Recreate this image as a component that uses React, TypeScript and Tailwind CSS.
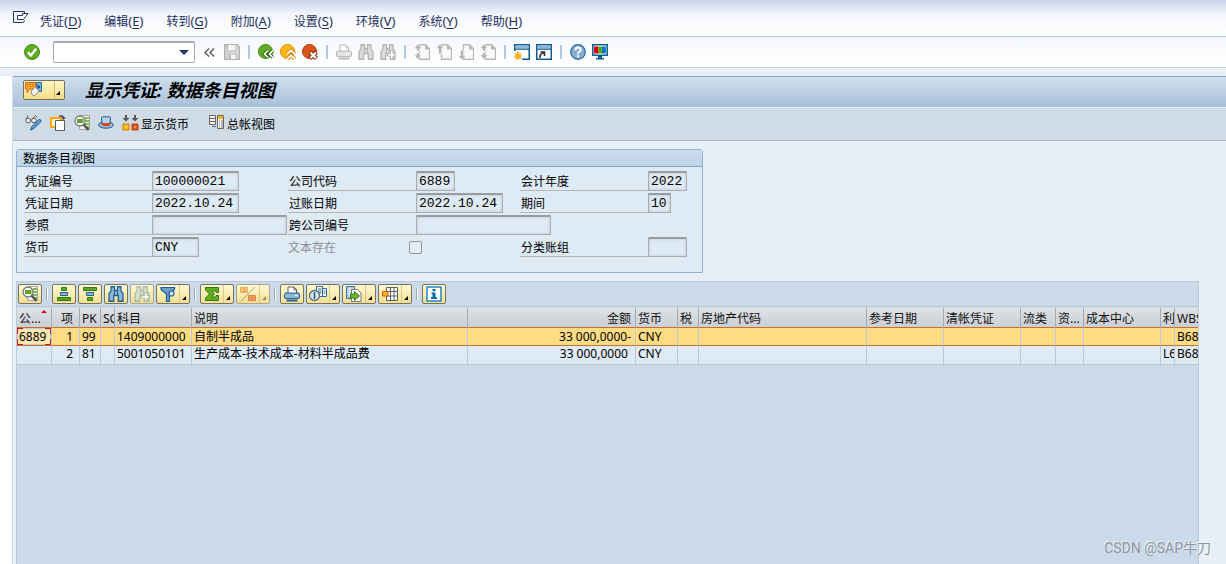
import type { ReactNode } from "react";

function Icon({ children, w = 16 }: { children: ReactNode; w?: number }) {
  return (
    <svg width={w} height="16" viewBox={`0 0 ${w} 16`} fill="none" className="block shrink-0" aria-hidden="true">
      {children}
    </svg>
  );
}

const G = "#b9b9b9";

const CheckIcon = () => (
  <Icon>
    <circle cx="8" cy="8" r="7.5" fill="#5fae22" stroke="#3f8a1c" />
    <path d="M3.8 8.2l3 3.2 5.4-6.6" stroke="#fff" strokeWidth="2.4" />
  </Icon>
);
const SaveIcon = () => (
  <Icon>
    <path d="M.75.75h12.500l2 2v12.500H.75z" fill="#d9d9d9" stroke="#b4b4b4" strokeWidth="1.500" />
    <path d="M3.500 1v6h8.500V1" fill="#f6f6f6" stroke={G} />
    <path d="M4 15v-5h8v5" fill="#f6f6f6" stroke={G} />
    <path d="M5 11h2v4H5z" fill={G} />
  </Icon>
);
const BackIcon = () => (
  <Icon>
    <circle cx="7.5" cy="7.5" r="7" fill="#62ad22" stroke="#3c8719" />
    <path d="M10 6.5L6.5 10l3.5 3.5M15 6.5L11.5 10l3.5 3.5" stroke="#2c6c12" strokeWidth="3.6" />
    <path d="M10 6.5L6.5 10l3.5 3.5M15 6.5L11.5 10l3.5 3.5" stroke="#fff" strokeWidth="1.7" />
  </Icon>
);
const UpIcon = () => (
  <Icon>
    <circle cx="7.5" cy="7.5" r="7" fill="#fdb913" stroke="#e08a00" />
    <path d="M7 10l4-3.5 4 3.5M7 15l4-3.5 4 3.5" stroke="#d87c00" strokeWidth="3.6" />
    <path d="M7 10l4-3.5 4 3.5M7 15l4-3.5 4 3.5" stroke="#fff" strokeWidth="1.7" />
  </Icon>
);
const CancelIcon = () => (
  <Icon>
    <circle cx="7.5" cy="7.5" r="7" fill="#d9531e" stroke="#b23c10" />
    <path d="M8 8l6.5 6.5M14.5 8L8 14.5" stroke="#8e2c08" strokeWidth="4.2" />
    <path d="M8.5 8.5l5.5 5.5M14 8.5L8.5 14" stroke="#fff" strokeWidth="2.2" />
  </Icon>
);
const PrintIcon = ({ color }: { color?: boolean }) => {
  const s = color ? "#1c5f93" : G;
  return (
    <Icon>
      <path d="M4 7V1h6l2.5 2.5V7" fill="#fff" stroke={color ? "#5a5a5a" : G} />
      <path d="M10 1v3h3" stroke={color ? "#5a5a5a" : G} />
      <rect x=".5" y="7" width="15" height="5.5" rx="1.5" fill={color ? "#8fb6d6" : "#e2e2e2"} stroke={s} />
      <path d="M11 9.5h2.5" stroke="#fff" />
      <path d="M2.5 14.5h11" stroke={s} strokeWidth="2" />
    </Icon>
  );
};
const Binoculars = ({ kind = "gray" }: { kind?: "gray" | "grayPlus" | "blue" | "bluePlus" }) => {
  const plus = kind === "grayPlus" || kind === "bluePlus";
  const stroke = kind === "blue" ? "#1f6295" : kind === "bluePlus" ? "#98b0ac" : "#b4b4b4";
  const fill = kind === "blue" ? "#8db5da" : kind === "bluePlus" ? "#d3dfd2" : "#dcdcdc";
  return (
    <Icon>
      <path d="M3 .75h3.5V4.5h3V.75H13V5l2 2.5v7.75h-4.750V9.5h-4.5v5.750H1V7.500L3 5z" fill={fill} stroke={stroke} strokeWidth="1.3" />
      <path d="M6.5 4.500v5M9.500 4.500v5" stroke={stroke} />
      {plus && (
        <path d="M10.500 6.500H13v3h2.500V12H13v3h-2.500v-3h-3V9.500h3z" fill="#fff" stroke={stroke} />
      )}
    </Icon>
  );
};
const PageIcon = ({ kind }: { kind: "first" | "prev" | "next" | "last" }) => (
  <Icon>
    <path d="M5.5.75h6l4 4v10.500H5.500z" fill="#fafafa" stroke={G} strokeWidth="1.3" />
    <path d="M11 .500V5.500h5z" fill={G} />
    <g fill="#b4b4b4" stroke="#fff" strokeWidth=".6">
      {(kind === "first" || kind === "last") && (
        <path d="M4 0L0 4.500h2.500V7h3V4.500H8zM4 15.500L0 11h2.500V8.500h3V11H8z" />
      )}
      {kind === "prev" && <path d="M4 0L0 4.500h2.500V10h3V4.500H8z" />}
      {kind === "next" && <path d="M4 16l-4-4.500h2.500V6h3v5.500H8z" />}
    </g>
  </Icon>
);
const WindowIcon = ({ kind }: { kind: "new" | "shortcut" }) => (
  <Icon>
    <rect x=".75" y=".75" width="14.5" height="14.5" fill="#fff" stroke="#0d5d92" strokeWidth="1.5" />
    <path d="M1.5 1.5h13v3h-13z" fill="#8db9dc" />
    <path d="M1 5.2h14" stroke="#0d5d92" strokeWidth="1.2" />
    {kind === "new" ? (
      <>
        <path d="M0 7h8v9H0z" fill="#fff" />
        <path d="M4 7.5V16M0 12h8M1.200 9.200l5.600 5.600M6.800 9.200l-5.600 5.600" stroke="#f08a00" strokeWidth="1.2" />
        <circle cx="4" cy="12" r="2.5" fill="#ffb400" />
      </>
    ) : (
      <path d="M4 14V12q0-2 4-3.500M4.500 8H8.500v4" stroke="#333" strokeWidth="1.6" />
    )}
  </Icon>
);
const HelpIcon = () => (
  <Icon>
    <circle cx="8" cy="8" r="7.3" fill="#86aed2" stroke="#2a6a9c" strokeWidth="1.2" />
    <path d="M5.5 6.2q0-2.7 2.600-2.700t2.500 2.300q0 1.300-1.400 2-1.200.6-1.200 2.200M8 11.200v2" stroke="#fff" strokeWidth="1.9" />
  </Icon>
);
const MonitorIcon = () => (
  <Icon>
    <rect x=".75" y=".75" width="14.5" height="10.5" fill="#fff" stroke="#0d5d92" strokeWidth="1.5" />
    <path d="M2 2.500h4v7H2z" fill="#d8000f" />
    <path d="M6 2.500h4v7H6z" fill="#5fa81e" />
    <path d="M10 2.500h4v7h-4z" fill="#0a7bc4" />
    <path d="M6 11.500h4V14h2v1.500H4V14h2z" fill="#0d5d92" />
  </Icon>
);
const MenuIcon = () => (
  <Icon>
    <path d="M11.500 2.500V.5H.5v11h9q2 0 2-2" stroke="#1f3566" />
    <path d="M4.500 4.500h5v-2H15L10.500 8.500h-6z" fill="#fff" stroke="#1f3566" />
  </Icon>
);
const ObjectsIcon = () => (
  <Icon w={18}>
    <path d="M11.500.5h5v9h-6z" fill="#7db3dc" stroke="#1c6ca5" />
    <path d="M12.500 2.500L15.500 5l-3 2.500z" fill="#0d4f80" />
    <path d="M.5.500h10V7H5l-3 3.500V7H.500z" fill="#fbb02a" stroke="#d9601a" />
    <path d="M2 2.500h7M2 4.500h7" stroke="#d9601a" strokeDasharray="1.500 1" />
    <path d="M7 8l3.500-3L14 9l-3.500 4-2 1L6 11z" fill="#f8f6ec" stroke="#8a8a8a" />
  </Icon>
);
const GlassesIcon = () => (
  <Icon w={17}>
    <circle cx="3.200" cy="5.500" r="2.300" fill="#f5f8fa" stroke="#555" />
    <circle cx="9" cy="5.500" r="2.300" fill="#f5f8fa" stroke="#555" />
    <path d="M1 4.500L3 .500M5.500 5h1.200M8 3.200L10.500.500l2 2" stroke="#666" />
    <path d="M14.500 4l2 2-7.500 7.500-3.500 1.500L7 11.500z" fill="#5b9fd2" stroke="#1c5f93" />
  </Icon>
);
const OtherDocIcon = () => (
  <Icon>
    <path d="M1 3h10v9H1z" fill="#fff3d0" stroke="#fba80e" strokeWidth="2" />
    <path d="M5.500 5.500h9v10h-9z" fill="#fff" stroke="#5c5c5c" />
    <path d="M9 1h2.500q2 0 2 2" stroke="#4a4a4a" strokeWidth="1.4" />
    <path d="M11 2.500h5L13.500 5z" fill="#4a4a4a" />
  </Icon>
);
const DetailIcon = () => (
  <Icon>
    <path d="M5.500.5h10v14h-10z" fill="#f5f5ee" stroke="#a5a5a0" />
    <path d="M11 3h4M11 6h4M11 9h4M11 12h4" stroke="#5fa52b" strokeWidth="1.5" />
    <circle cx="6" cy="6" r="5" fill="#fff" stroke="#7a7a7a" strokeWidth="1.3" />
    <path d="M3 4h6.500v4H3z" fill="#5fa52b" />
    <path d="M9.500 9.500l5 5.500" stroke="#555" strokeWidth="2.6" />
  </Icon>
);
const HatIcon = () => (
  <Icon>
    <ellipse cx="8" cy="10" rx="7.4" ry="3.2" fill="#9cc4e4" stroke="#165b8e" />
    <path d="M4 9L3.500 2.500Q4.500 1 8 2q3.500-1 4.500.5L12 9z" fill="#b5d4ec" stroke="#165b8e" />
    <path d="M3.500 7.500q4.500 2 9 0V10q-4.500 2.500-9 0z" fill="#d34514" />
  </Icon>
);
const CurrencyIcon = () => (
  <Icon w={17}>
    <path d="M3 0h2v3h2.500L4 6.500.500 3H3zM12 0h2v3h2.500L13 6.500 9.500 3H12z" fill="#555" />
    <path d="M1 9h6v6H1z" fill="#fdb913" stroke="#d97a00" />
    <path d="M10 9h6v6h-6z" fill="#e2571c" stroke="#b23c10" />
    <path d="M3 11h2v2H3z" fill="#ffd56a" />
    <path d="M12 11h2v2h-2z" fill="#f58a55" />
  </Icon>
);
const LedgerIcon = () => (
  <Icon>
    <path d="M.5.500h6v9h-6zM.5 3.500h6M.5 6.500h6M3 11.500h4" stroke="#666" fill="#f3f3f3" />
    <path d="M8.500.5h6v13h-6z" fill="#f7f7f7" stroke="#666" />
    <path d="M9 1h5v3H9z" fill="#fbb016" />
    <path d="M10 6h1M12 6h2M10 8h1M12 8h2M10 10h1M12 10h2M10 12h1M12 12h2" stroke="#777" />
  </Icon>
);
const SortIcon = ({ desc }: { desc?: boolean }) => (
  <Icon>
    {desc ? (
      <>
        <path d="M1.500 1.500h13v3h-13z" fill="#5aa52a" stroke="#357a16" />
        <path d="M4.500 6.500h7v3h-7z" fill="#8cb6d8" stroke="#1c6095" />
        <path d="M5.500 11.500h5v3h-5z" fill="#5aa52a" stroke="#357a16" />
      </>
    ) : (
      <>
        <path d="M5.500 1.500h5v3h-5z" fill="#5aa52a" stroke="#357a16" />
        <path d="M4.500 6.500h7v3h-7z" fill="#8cb6d8" stroke="#1c6095" />
        <path d="M1.500 11.500h13v3h-13z" fill="#5aa52a" stroke="#357a16" />
      </>
    )}
  </Icon>
);
const FilterIcon = () => (
  <Icon>
    <path d="M1 1.500h13.500v2L9.500 8v7.500h-3V8L1 3.500z" fill="#6aa0cb" stroke="#1c6095" strokeWidth="1.2" />
    <circle cx="11.500" cy="7.500" r="2.500" fill="#dceaf4" stroke="#1c6095" strokeWidth="1.2" />
  </Icon>
);
const SumIcon = () => (
  <Icon>
    <path d="M1.500 1.500h13v5h-2.500V5H7.500L10.500 8l-3 3H12V9.500h2.500v5h-13V12l4-4-4-4z" fill="#62ad22" stroke="#34760f" />
  </Icon>
);
const SubtotalIcon = () => (
  <Icon>
    <path d="M.5 1.500h7v5h-7z" fill="#f9c05a" stroke="#ee9a4a" />
    <path d="M8.500 9.500h7v5h-7z" fill="#ea8a50" stroke="#d8703a" />
    <path d="M2.500 3q2-1 3 1t-3 1.500M10.500 11l3.500 2.500M14 10.500l-3.500 3" stroke="#e07a3a" />
    <path d="M1 15L15 1" stroke="#8f8b72" />
  </Icon>
);
const ViewIcon = () => (
  <Icon w={18}>
    <path d="M7.500.5h6v10h-6zM13.500 2.500h4v8h-4z" fill="#fff" stroke="#2a6a9c" />
    <path d="M9 3h3.500M9 5h3.500M9 7h3.500M14.500 5h2M14.500 7h2" stroke="#2a6a9c" />
    <circle cx="5.500" cy="9.500" r="5" fill="#dfe9f0" stroke="#5a6a74" strokeWidth="1.3" />
    <path d="M5.500 6v7" stroke="#1c6095" strokeWidth="1.6" />
  </Icon>
);
const ExportIcon = () => (
  <Icon>
    <path d="M.5.500h8v12h-8z" fill="#a9cae4" stroke="#3a76a5" />
    <path d="M2 3h5M2 5.500h4M2 8h3" stroke="#fff" />
    <path d="M5.500 3.500h6l3.500 3.500v8.500H5.500z" fill="#fff" stroke="#777" />
    <path d="M4.500 8h4V5.500L13.500 10l-5 4.500V12h-4z" fill="#6fb32c" stroke="#357a16" />
  </Icon>
);
const LayoutIcon = () => (
  <Icon>
    <path d="M4.500 1.500h11v13h-11zM8.500 1.500v13M12 1.500v13M4.500 5.500h11M4.500 10h11" fill="#fff" stroke="#5e5e5e" />
    <path d="M.5 5.500h5.500V10H.500z" fill="#fdb913" stroke="#dc5a10" />
  </Icon>
);
const InfoIcon = () => (
  <Icon>
    <rect x="1" y="1" width="14" height="14" fill="#fff" stroke="#1c86c4" strokeWidth="1.5" />
    <path d="M6.500 3h3v2.200h-3zM5.500 6.500h4V11H11v2H5v-2h1.500V8.200h-1z" fill="#0a6aa8" />
  </Icon>
);

type Tool = { label: string; icon: ReactNode } | null;

const systemTools: Tool[] = [
  { label: "保存", icon: <SaveIcon /> },
  null,
  { label: "返回", icon: <BackIcon /> },
  { label: "退出", icon: <UpIcon /> },
  { label: "取消", icon: <CancelIcon /> },
  null,
  { label: "打印", icon: <PrintIcon /> },
  { label: "查找", icon: <Binoculars /> },
  { label: "查找下一个", icon: <Binoculars kind="grayPlus" /> },
  null,
  { label: "首页", icon: <PageIcon kind="first" /> },
  { label: "上一页", icon: <PageIcon kind="prev" /> },
  { label: "下一页", icon: <PageIcon kind="next" /> },
  { label: "末页", icon: <PageIcon kind="last" /> },
  null,
  { label: "新建会话", icon: <WindowIcon kind="new" /> },
  { label: "创建快捷方式", icon: <WindowIcon kind="shortcut" /> },
  null,
  { label: "帮助", icon: <HelpIcon /> },
  { label: "定制本地布局", icon: <MonitorIcon /> },
];

const menus = [
  ["凭证", "D"],
  ["编辑", "E"],
  ["转到", "G"],
  ["附加", "A"],
  ["设置", "S"],
  ["环境", "V"],
  ["系统", "Y"],
  ["帮助", "H"],
];

type GridTool = { label: string; icon: ReactNode; menu?: boolean; off?: boolean } | null;

const gridTools: GridTool[] = [
  { label: "明细", icon: <DetailIcon /> },
  null,
  { label: "升序排序", icon: <SortIcon /> },
  { label: "降序排序", icon: <SortIcon desc /> },
  { label: "查找", icon: <Binoculars kind="blue" /> },
  { label: "继续查找", icon: <Binoculars kind="bluePlus" />, off: true },
  { label: "过滤器", icon: <FilterIcon />, menu: true },
  null,
  { label: "总计", icon: <SumIcon />, menu: true },
  { label: "小计", icon: <SubtotalIcon />, menu: true, off: true },
  null,
  { label: "打印", icon: <PrintIcon color /> },
  { label: "视图", icon: <ViewIcon />, menu: true },
  { label: "导出", icon: <ExportIcon />, menu: true },
  { label: "布局", icon: <LayoutIcon />, menu: true },
  null,
  { label: "信息", icon: <InfoIcon /> },
];

const columns = [
  { name: "公...", w: "w-[35px]" },
  { name: "项", w: "w-[28px]", align: "text-right pr-[6px]" },
  { name: "PK", w: "w-[21px]" },
  { name: "SG", w: "w-[14px]" },
  { name: "科目", w: "w-[77px]" },
  { name: "说明", w: "w-[276px]" },
  { name: "金额", w: "w-[168px]", align: "text-right pr-[4px]" },
  { name: "货币", w: "w-[42px]" },
  { name: "税", w: "w-[21px]" },
  { name: "房地产代码", w: "w-[168px]" },
  { name: "参考日期", w: "w-[77px]" },
  { name: "清帐凭证", w: "w-[77px]" },
  { name: "流类", w: "w-[35px]" },
  { name: "资...", w: "w-[28px]" },
  { name: "成本中心", w: "w-[77px]" },
  { name: "利", w: "w-[14px]" },
  { name: "WBS", w: "" },
];

const rows = [
  ["6889", "1", "99", "", "1409000000", "自制半成品", "33 000,0000-", "CNY", "", "", "", "", "", "", "", "", "B68"],
  ["", "2", "81", "", "5001050101", "生产成本-技术成本-材料半成品费", "33 000,0000\u00a0", "CNY", "", "", "", "", "", "", "", "L6", "B68"],
];

function Field({ id, label, value = "", w }: { id: string; label: string; value?: string; w: string }) {
  return (
    <>
      <label htmlFor={id} className="h-5 whitespace-nowrap border-b border-[#b4b4b4] pl-px pt-[3px] leading-4">
        {label}
      </label>
      <input
        id={id}
        readOnly
        defaultValue={value}
        className={`${w} h-5 rounded-[1px] border border-t-2 border-[#a9adb1] border-t-[#989ca0] bg-[#deeaf4] px-[2px] font-['Liberation_Mono','Noto_Sans_CJK_SC',monospace] text-[13px] leading-4 text-black shadow-[inset_0_0_3px_#b9c4ce] outline-none`}
      />
    </>
  );
}

function Corner({ pos }: { pos: string }) {
  return <span className={`absolute size-[6px] border-[#d0101c] ${pos}`} />;
}

export default function App() {
  return (
    <div className="relative flex min-h-screen flex-col overflow-hidden bg-white font-['Noto_Sans','Noto_Sans_CJK_SC',sans-serif] text-xs text-black">
      <nav className="flex h-[37px] items-center border-b border-[#bcc5d8] bg-linear-to-b from-[#c9d6e9] via-[#f3f6fa] via-40% to-white pl-[13px] pt-[6px] text-[#1f3060]">
        <button type="button" aria-label="窗口菜单" className="-mt-1">
          <MenuIcon />
        </button>
        <div className="flex gap-[23px] pl-[11px]">
          {menus.map(([name, key]) => (
            <button key={key} type="button" className="flex items-baseline whitespace-nowrap leading-5">
              {name}
              <span className="text-[13px]">
                (<u className="underline-offset-2">{key}</u>)
              </span>
            </button>
          ))}
        </div>
      </nav>

      <div className="flex h-[31px] items-center border-b border-[#c8ced8] bg-linear-to-b from-[#f4f7fb] to-white pl-6">
        <button type="button" aria-label="确认">
          <CheckIcon />
        </button>
        <div className="ml-[13px] flex h-[22px] w-[142px] items-center rounded-[2px] border border-t-2 border-[#a9adb3] bg-white">
          <input aria-label="命令" className="h-full min-w-0 flex-1 px-1 outline-none" />
          <button type="button" aria-label="命令历史" className="px-[5px]">
            <svg width="10" height="5" viewBox="0 0 10 5" className="block">
              <path d="M0 0h10L5 5z" fill="#1f3566" />
            </svg>
          </button>
        </div>
        <button type="button" aria-label="收起" className="mx-[9px]">
          <svg width="11" height="9" viewBox="0 0 11 9" fill="none" stroke="#555" strokeWidth="1.3" className="block">
            <path d="M5 .5l-4 4 4 4M10 .5l-4 4 4 4" />
          </svg>
        </button>
        <div className="flex items-center gap-[6px]">
          {systemTools.map((t, i) =>
            t ? (
              <button key={i} type="button" aria-label={t.label}>
                {t.icon}
              </button>
            ) : (
              <span key={i} className="mx-[2px] h-[14px] w-[2px] bg-[#b3c9e2]" />
            ),
          )}
        </div>
      </div>

      <div className="h-2 bg-linear-to-b from-[#eef1f6] to-[#e6ebf3]" />

      <main className="ml-[13px] flex flex-1 flex-col bg-[#e8eff7] shadow-[-1px_0_0_#d3dce8]">
        <header className="flex h-8 items-center border-b border-t border-b-[#e6eef6] border-t-[#8ea8c0] bg-linear-to-b from-[#cfdfec] to-[#a9c0da] pb-1 pl-[10px]">
          <div className="flex h-5 w-[42px] rounded-[2px] border border-[#746f5c] bg-linear-to-b from-[#fff7c6] to-[#f6dc85]">
            <button type="button" aria-label="对象服务" className="flex w-[30px] items-center pl-px">
              <ObjectsIcon />
            </button>
            <button type="button" aria-label="更多服务" className="flex flex-1 items-end justify-end border-l border-[#c9b87c] pb-1 pr-1">
              <svg width="4" height="4" viewBox="0 0 4 4">
                <path d="M4 0v4H0z" />
              </svg>
            </button>
          </div>
          <h1 className="pl-5 text-[18px] font-bold italic leading-6">显示凭证: 数据条目视图</h1>
        </header>

        <div className="flex h-[33px] items-center gap-2 border-b border-[#a8b8cc] bg-[#cfdce6] pb-[2px] pl-3">
          <button type="button" aria-label="显示/更改"><GlassesIcon /></button>
          <button type="button" aria-label="其他凭证"><OtherDocIcon /></button>
          <button type="button" aria-label="选择单个项目"><DetailIcon /></button>
          <button type="button" aria-label="显示抬头"><HatIcon /></button>
          <button type="button" className="flex items-center gap-[2px] whitespace-nowrap">
            <CurrencyIcon />
            <span className="pt-1">显示货币</span>
          </button>
          <button type="button" className="ml-3 flex items-center gap-[2px] whitespace-nowrap">
            <LedgerIcon />
            <span className="pt-1">总帐视图</span>
          </button>
        </div>

        <section className="ml-[3px] mt-2 w-[687px] max-w-full rounded-t-[3px] border border-[#93b0ce] bg-[#deeaf4]">
          <h2 className="h-[17px] border-b border-[#86a3c6] bg-linear-to-b from-[#cbdeed] to-[#bcd4e8] pl-[6px] leading-[17px]">
            数据条目视图
          </h2>
          <div className="grid grid-cols-[128px_136px_128px_104px_128px_1fr] gap-y-[2px] pb-[15px] pl-[7px] pt-1">
            <Field id="doc" label="凭证编号" value="100000021" w="w-[87px]" />
            <Field id="company" label="公司代码" value="6889" w="w-[39px]" />
            <Field id="year" label="会计年度" value="2022" w="w-[39px]" />
            <Field id="docdate" label="凭证日期" value="2022.10.24" w="w-[87px]" />
            <Field id="posting" label="过账日期" value="2022.10.24" w="w-[87px]" />
            <Field id="period" label="期间" value="10" w="w-[23px]" />
            <Field id="ref" label="参照" w="w-[135px]" />
            <Field id="cross" label="跨公司编号" w="w-[135px]" />
            <span className="col-span-2" />
            <Field id="currency" label="货币" value="CNY" w="w-[47px]" />
            <div className="col-span-2 flex items-center">
              <label htmlFor="texts" className="w-[121px] pt-[2px] leading-[18px] text-[#8b9096]">文本存在</label>
              <input
                id="texts"
                type="checkbox"
                disabled
                className="size-[13px] appearance-none rounded-[2px] border border-[#8f9499] bg-[#e3edf5]"
              />
            </div>
            <Field id="ledger" label="分类账组" w="w-[39px]" />
          </div>
        </section>

        <section className="ml-[3px] mr-[27px] mt-2 flex-1 border border-b-0 border-[#bccad9] bg-[#cbdae8]">
          <div className="flex items-center gap-[2px] border-b border-[#b9c7d6] py-[2px] pl-px">
            {gridTools.map((t, i) =>
              t ? (
                <button
                  key={i}
                  type="button"
                  aria-label={t.label}
                  className={`flex h-5 rounded-[2px] border bg-linear-to-b from-[#fff9d2] to-[#f3df92] ${t.menu ? "w-[34px]" : "w-6"} ${t.off ? "border-[#a9a68f]" : "border-[#76735f]"}`}
                >
                  <span className="flex h-full w-[22px] shrink-0 items-center justify-center">
                    <span className={t.off ? "opacity-80" : ""}>{t.icon}</span>
                  </span>
                  {t.menu && (
                    <span className="flex h-full flex-1 items-end justify-end border-l border-[#d8c88c] pb-[3px] pr-[3px]">
                      <svg width="4" height="4" viewBox="0 0 4 4">
                        <path d="M4 0v4H0z" fill={t.off ? "#8f8c78" : "#000"} />
                      </svg>
                    </span>
                  )}
                </button>
              ) : (
                <span key={i} className="mx-[2px] h-3 w-[2px] border-l border-[#9aa4ad] bg-white" />
              ),
            )}
          </div>
          <div className="mt-px overflow-hidden">
            <table className="w-full min-w-[1182px] table-fixed border-separate border-spacing-0">
              <colgroup>
                {columns.map((c) => (
                  <col key={c.name} className={c.w} />
                ))}
              </colgroup>
              <thead>
                <tr>
                  {columns.map((c, i) => (
                    <th
                      key={c.name}
                      scope="col"
                      className={`relative h-[19px] overflow-hidden whitespace-nowrap border-r border-[#9fabb7] bg-linear-to-b from-[#dfe3e6] via-[#d3d8dd] to-[#cbcfd6] p-0 pl-[2px] pt-[2px] font-normal leading-[17px] text-[#111] ${c.align ?? "text-left"}`}
                    >
                      {c.name}
                      {i === 0 && (
                        <svg width="6" height="3" viewBox="0 0 6 3" className="absolute right-1 top-[2px]">
                          <path d="M3 0l3 3H0z" fill="#c8102e" />
                        </svg>
                      )}
                    </th>
                  ))}
                </tr>
              </thead>
              <tbody>
                {rows.map((r, ri) => (
                  <tr key={ri}>
                    {r.map((v, ci) => (
                      <td
                        key={ci}
                        className={`relative h-[19px] overflow-hidden whitespace-nowrap border-r border-r-[#bcc8d5] p-0 pl-[2px] ${
                          ri === 0
                            ? "border-y border-y-[#c8702a] bg-[#fddc83] leading-[17px]"
                            : "border-b border-b-[#bcc8d5] bg-[#deeaf4] pb-[2px] leading-4"
                        } ${columns[ci].align ?? ""}`}
                      >
                        {ri === 0 && ci === 0 ? (
                          <>
                            <span className="absolute inset-0 border border-[#bfcbd6] bg-[#fbe8ae]" />
                            <Corner pos="left-0 top-0 border-l border-t" />
                            <Corner pos="right-0 top-0 border-r border-t" />
                            <Corner pos="bottom-0 left-0 border-b border-l" />
                            <Corner pos="bottom-0 right-0 border-b border-r" />
                            <span className="relative">{v}</span>
                          </>
                        ) : (
                          v
                        )}
                      </td>
                    ))}
                  </tr>
                ))}
              </tbody>
            </table>
          </div>
        </section>
      </main>

      <p className="absolute bottom-[6px] right-[15px] font-['Roboto','Noto_Sans_CJK_SC',sans-serif] text-sm leading-5 text-[#8d969f] [text-shadow:-1px_-1px_0_#eef3f8]">
        CSDN @SAP牛刀
      </p>
    </div>
  );
}
